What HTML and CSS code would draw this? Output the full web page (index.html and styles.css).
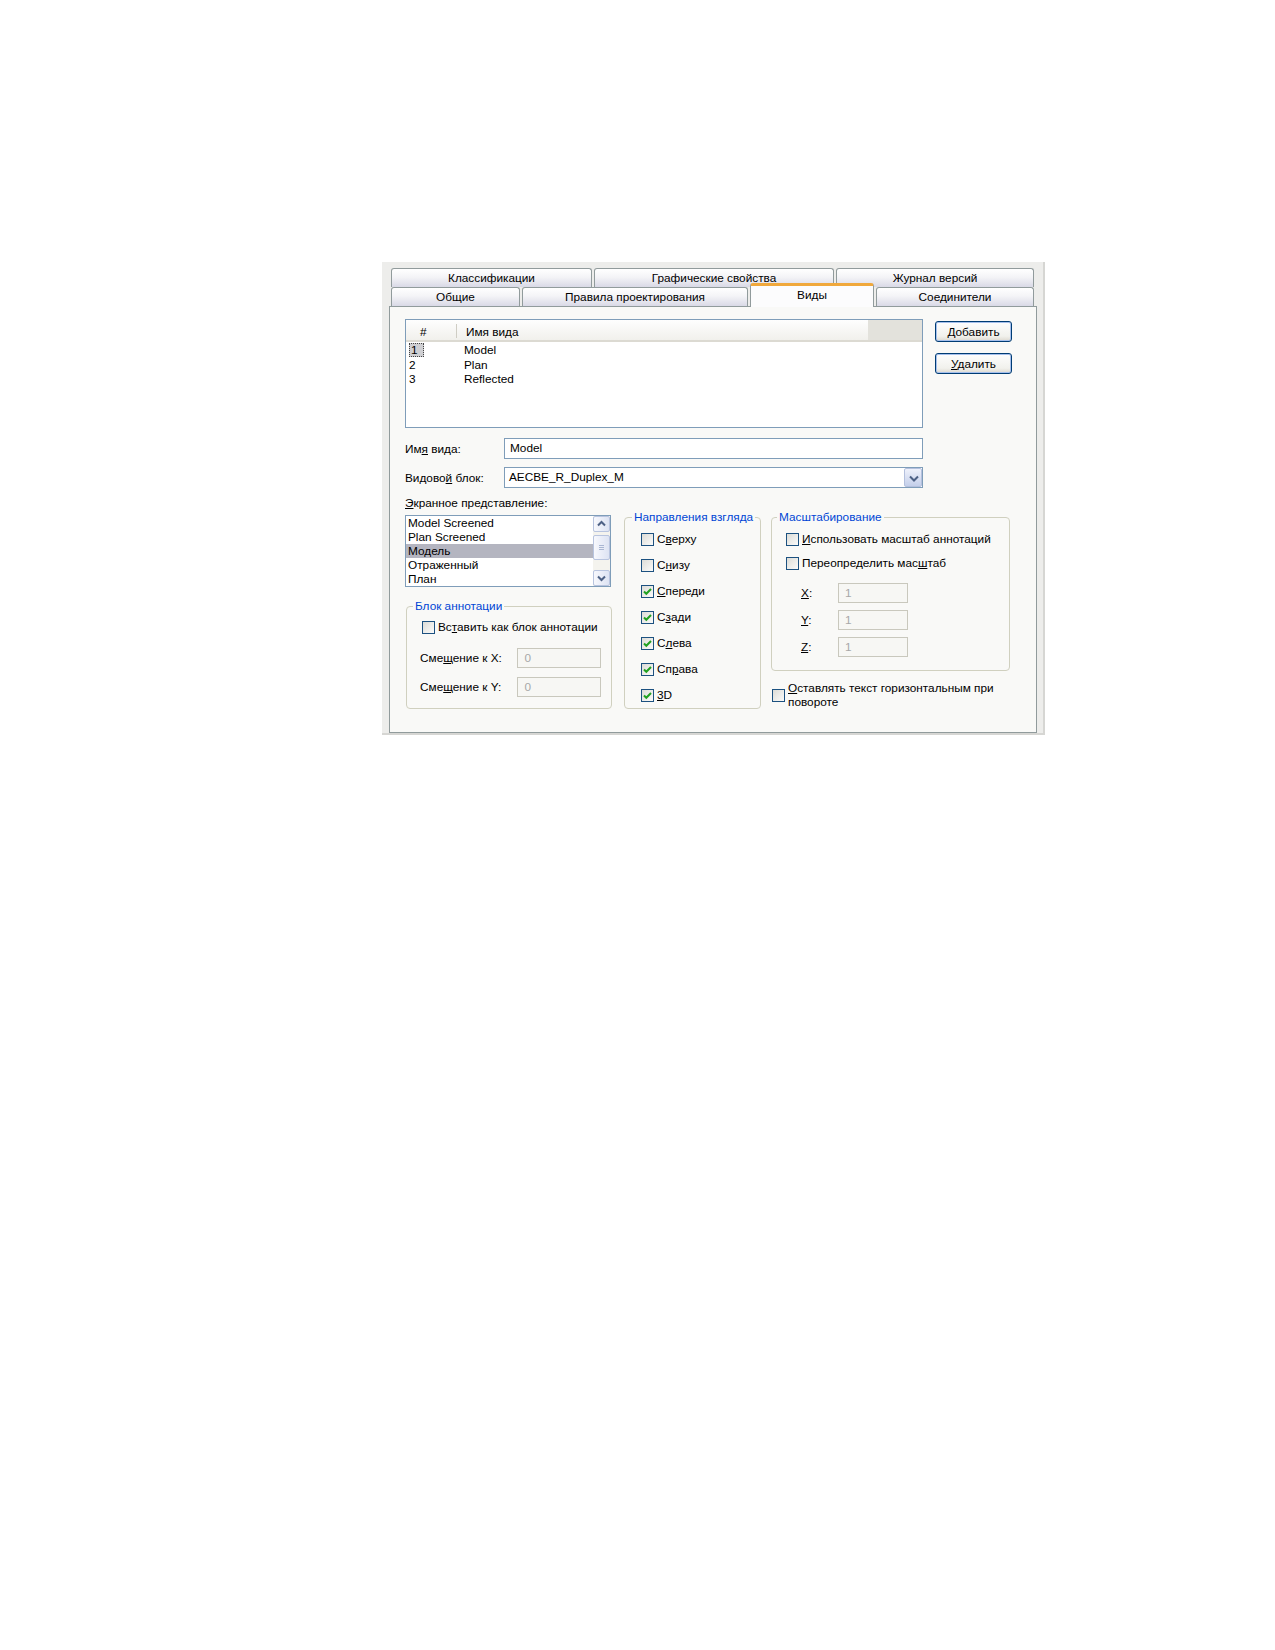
FILE: index.html
```html
<!DOCTYPE html>
<html lang="ru">
<head>
  <meta charset="UTF-8" />
  <title>Свойства стиля — Виды</title>
  <link rel="stylesheet" href="styles.css">
</head>
<body>
  <div class="page">
    <div class="dialog">
      <!-- two rows of tabs, the front row holds the active one -->
      <div class="tab-row">
        <div class="tab tab-classes">Классификации</div>
        <div class="tab tab-graphics">Графические свойства</div>
        <div class="tab tab-history">Журнал версий</div>
      </div>
      <div class="tab-row">
        <div class="tab tab-general">Общие</div>
        <div class="tab tab-rules">Правила проектирования</div>
        <div class="tab tab-views tab-active">Виды</div>
        <div class="tab tab-connectors">Соединители</div>
      </div>

      <div class="panel">
        <div class="top">
          <div class="top-main">
            <div class="listview">
              <div class="lv-head">
                <div class="lv-num">#</div>
                <div class="lv-name">Имя вида</div>
                <div class="lv-fill"></div>
              </div>
              <div class="lv-rows">
                <div class="lv-row"><span class="lv-num"><span class="focus">1</span></span><span class="lv-name">Model</span></div>
                <div class="lv-row"><span class="lv-num">2</span><span class="lv-name">Plan</span></div>
                <div class="lv-row"><span class="lv-num">3</span><span class="lv-name">Reflected</span></div>
              </div>
            </div>

            <div class="field field-name">
              <div class="field-label">Им<u>я</u> вида:</div>
              <div class="edit">Model</div>
            </div>
            <div class="field">
              <div class="field-label">Видово<u>й</u> блок:</div>
              <div class="combo">
                <span class="combo-text">AECBE_R_Duplex_M</span>
                <span class="combo-btn">
                  <svg width="18" height="19" viewBox="0 0 18 19"><path d="M5 7.5 L9 11.5 L13 7.5" fill="none" stroke="#4d6185" stroke-width="2"/></svg>
                </span>
              </div>
            </div>
          </div>

          <div class="buttons">
            <button class="btn"><u>Д</u>обавить</button>
            <button class="btn"><u>У</u>далить</button>
          </div>
        </div>

        <div class="bottom">
          <div class="col-display">
            <div class="caption"><u>Э</u>кранное представление:</div>
            <div class="listbox">
              <div class="lb-items">
                <div class="lb-item">Model Screened</div>
                <div class="lb-item">Plan Screened</div>
                <div class="lb-item selected">Модель</div>
                <div class="lb-item">Отраженный</div>
                <div class="lb-item">План</div>
              </div>
              <div class="scrollbar">
                <div class="sb-btn">
                  <svg width="15" height="14" viewBox="0 0 15 14"><path d="M4 8.5 L7.5 5 L11 8.5" fill="none" stroke="#4d6185" stroke-width="2"/></svg>
                </div>
                <div class="sb-thumb">
                  <svg width="15" height="23" viewBox="0 0 15 23"><path d="M5 9.5 H10 M5 11.5 H10 M5 13.5 H10" stroke="#a9b6d3" stroke-width="1"/></svg>
                </div>
                <div class="sb-track"></div>
                <div class="sb-btn">
                  <svg width="15" height="14" viewBox="0 0 15 14"><path d="M4 5.5 L7.5 9 L11 5.5" fill="none" stroke="#4d6185" stroke-width="2"/></svg>
                </div>
              </div>
            </div>

            <fieldset class="group group-note">
              <legend>Блок аннотации</legend>
              <div class="check"><span class="box"></span><span>Вс<u>т</u>авить как блок аннотации</span></div>
              <div class="offset offset-x">
                <span class="offset-label">Сме<u>щ</u>ение к X:</span>
                <span class="edit-off edit-offset">0</span>
              </div>
              <div class="offset offset-y">
                <span class="offset-label">Сме<u>щ</u>ение к Y:</span>
                <span class="edit-off edit-offset">0</span>
              </div>
            </fieldset>
          </div>

          <fieldset class="group group-dirs">
            <legend>Направления взгляда</legend>
            <div class="stack">
              <div class="check"><span class="box"></span><span>С<u>в</u>ерху</span></div>
              <div class="check"><span class="box"></span><span>С<u>н</u>изу</span></div>
              <div class="check"><span class="box checked"><svg width="11" height="11" viewBox="0 0 11 11"><path d="M2 5.5 L4.3 7.8 L9 3" fill="none" stroke="#21a121" stroke-width="2"/></svg></span><span><u>С</u>переди</span></div>
              <div class="check"><span class="box checked"><svg width="11" height="11" viewBox="0 0 11 11"><path d="M2 5.5 L4.3 7.8 L9 3" fill="none" stroke="#21a121" stroke-width="2"/></svg></span><span>С<u>з</u>ади</span></div>
              <div class="check"><span class="box checked"><svg width="11" height="11" viewBox="0 0 11 11"><path d="M2 5.5 L4.3 7.8 L9 3" fill="none" stroke="#21a121" stroke-width="2"/></svg></span><span>С<u>л</u>ева</span></div>
              <div class="check"><span class="box checked"><svg width="11" height="11" viewBox="0 0 11 11"><path d="M2 5.5 L4.3 7.8 L9 3" fill="none" stroke="#21a121" stroke-width="2"/></svg></span><span>Сп<u>р</u>ава</span></div>
              <div class="check"><span class="box checked"><svg width="11" height="11" viewBox="0 0 11 11"><path d="M2 5.5 L4.3 7.8 L9 3" fill="none" stroke="#21a121" stroke-width="2"/></svg></span><span><u>3</u>D</span></div>
            </div>
          </fieldset>

          <div class="col-scale">
            <fieldset class="group group-scale">
              <legend>Масштабирование</legend>
              <div class="check"><span class="box"></span><span><u>И</u>спользовать масштаб аннотаций</span></div>
              <div class="check check-second"><span class="box"></span><span>Переопределить мас<u>ш</u>таб</span></div>
              <div class="scale-row scale-row-first">
                <span class="scale-label"><u>X</u>:</span>
                <span class="edit-off edit-scale">1</span>
              </div>
              <div class="scale-row">
                <span class="scale-label"><u>Y</u>:</span>
                <span class="edit-off edit-scale">1</span>
              </div>
              <div class="scale-row">
                <span class="scale-label"><u>Z</u>:</span>
                <span class="edit-off edit-scale">1</span>
              </div>
            </fieldset>
            <div class="check-keep">
              <span class="box"></span>
              <span class="keep-text"><u>О</u>ставлять текст горизонтальным при повороте</span>
            </div>
          </div>
        </div>
      </div>
    </div>
  </div>
</body>
</html>
```

FILE: styles.css
```css
* {
  box-sizing: border-box;
}

body {
  margin: 0;
  background: #ffffff;
  color: #000000;
  font-family: "Liberation Sans", Arial, sans-serif;
  font-size: 11.8px;
}

.page {
  padding: 262px 0 0 382px;
}

.dialog {
  width: 663px;
  height: 473px;
  padding: 6px 6px 0 7px;
  background: #ededeb;
  border-right: 2px solid #d6d6d3;
  border-bottom: 2px solid #d6d6d3;
}

/* Tabs */
.tab-row {
  display: flex;
  gap: 2px;
  height: 19px;
  margin-left: 2px;
}

.tab {
  height: 19px;
  border: 1px solid #919b9c;
  border-bottom: none;
  border-radius: 3px 3px 0 0;
  background: linear-gradient(#ffffff, #f4f4f7 45%, #d9d9e6);
  text-align: center;
  line-height: 18px;
  white-space: nowrap;
}

.tab-classes { width: 201px; }
.tab-graphics { width: 240px; }
.tab-history { width: 198px; }
.tab-general { width: 129px; }
.tab-rules { width: 226px; }
.tab-views { width: 124px; }
.tab-connectors { width: 158px; }

.tab-active {
  position: relative;
  z-index: 1;
  height: 24px;
  margin-top: -4px;
  border-top: 3px solid #f0a83c;
  background: #fcfcfd;
}

/* Page of the active tab */
.panel {
  height: 427px;
  padding: 12px 0 0 15px;
  border: 1px solid #919b9c;
  background: #f9f9f7;
}

.top {
  display: flex;
  gap: 12px;
}

.top-main {
  width: 518px;
}

/* Views list */
.listview {
  height: 109px;
  border: 1px solid #7f9db9;
  background: #ffffff;
}

.lv-head {
  display: flex;
  height: 22px;
  padding-top: 4px;
  line-height: 16px;
  border-bottom: 2px solid #dcdad2;
  background: linear-gradient(#fefefe, #f1f0ec);
}

.lv-head .lv-num {
  width: 50px;
  padding-left: 14px;
}

.lv-head .lv-name {
  flex: 1;
  padding-left: 10px;
  background: linear-gradient(#cfcdc4, #cfcdc4) left 0 / 1px 14px no-repeat;
}

.lv-fill {
  width: 54px;
  margin-top: -4px;
  background: #e3e2dc;
}

.lv-rows {
  padding-top: 1px;
}

.lv-row {
  display: flex;
  height: 14.5px;
  line-height: 14px;
}

.lv-row .lv-num {
  width: 58px;
  padding-left: 3px;
}

.focus {
  display: inline-block;
  width: 15px;
  height: 14px;
  padding-left: 2px;
  background: #cfcfd2;
  outline: 1px dotted #444444;
  outline-offset: -1px;
}

/* Name and block fields */
.field {
  display: flex;
  align-items: center;
  height: 21px;
  margin-top: 8px;
}

.field-name {
  margin-top: 10px;
}

.field-label {
  width: 99px;
}

.edit {
  flex: 1;
  height: 21px;
  padding-left: 5px;
  border: 1px solid #7f9db9;
  background: #ffffff;
  line-height: 19px;
}

.combo {
  flex: 1;
  display: flex;
  height: 21px;
  border: 1px solid #7f9db9;
  background: #ffffff;
}

.combo-text {
  flex: 1;
  padding-left: 4px;
  line-height: 19px;
}

.combo-btn {
  width: 18px;
  height: 19px;
  border: 1px solid #b4c0dd;
  border-radius: 2px;
  background: linear-gradient(#eef1fb, #c4cfea);
}

.combo-btn svg,
.sb-btn svg,
.sb-thumb svg,
.box svg {
  display: block;
}

.buttons {
  display: flex;
  flex-direction: column;
  gap: 11px;
  padding-top: 2px;
}

.btn {
  width: 77px;
  height: 21px;
  padding: 0;
  border: 1px solid #003c74;
  border-radius: 3px;
  background: linear-gradient(#fefefe, #f1f1ec 75%, #dcd8cf);
  box-shadow: inset 0 0 0 1px #a6c0ec;
  color: #000000;
  font: inherit;
}

/* Lower part: display list and option groups */
.bottom {
  display: flex;
  align-items: flex-start;
  margin-top: 8px;
}

.col-display {
  width: 207px;
}

.caption {
  line-height: 14px;
}

.listbox {
  display: flex;
  width: 206px;
  height: 72px;
  margin-top: 5px;
  border: 1px solid #7f9db9;
  background: #ffffff;
}

.lb-items {
  flex: 1;
}

.lb-item {
  height: 14px;
  padding-left: 2px;
  line-height: 14px;
  white-space: nowrap;
}

.lb-item.selected {
  background: #b4b5c0;
}

.scrollbar {
  display: flex;
  flex-direction: column;
  width: 17px;
  background: #f4f3ee;
}

.sb-btn,
.sb-thumb {
  border: 1px solid #b8c4df;
  border-radius: 2px;
  background: linear-gradient(90deg, #f7f8fd, #dde3f3);
}

.sb-btn {
  height: 16px;
}

.sb-thumb {
  height: 25px;
  margin-top: 3px;
}

.sb-track {
  flex: 1;
}

/* Group boxes; the legend sits at the padding edge, so pull it back */
.group {
  min-width: 0;
  margin: 0;
  border: 1px solid #d0d0bf;
  border-radius: 4px;
}

.group legend {
  padding: 0 2px;
  color: #0046d5;
  line-height: 14px;
  white-space: nowrap;
}

.group-note {
  width: 206px;
  margin: 12px 0 0 1px;
  padding: 7px 10px 11px 15px;
}

.group-note legend {
  margin-left: -9px;
}

.group-dirs {
  width: 137px;
  margin: 14px 0 0 12px;
  padding: 8px 0 6px 16px;
}

.group-dirs legend {
  margin-left: -9px;
}

.stack {
  display: flex;
  flex-direction: column;
  gap: 12px;
}

.col-scale {
  width: 239px;
  margin: 14px 0 0 10px;
}

.group-scale {
  padding: 8px 0 13px 14px;
}

.group-scale legend {
  margin-left: -9px;
}

/* Checkboxes */
.check {
  display: flex;
  align-items: center;
  height: 14px;
  white-space: nowrap;
}

.check-second {
  margin-top: 10px;
}

.box {
  flex: none;
  width: 13px;
  height: 13px;
  margin-right: 3px;
  border: 1px solid #1c5180;
  background: linear-gradient(135deg, #dcdcd7, #fbfbfa);
}

.check-keep {
  display: flex;
  align-items: center;
  margin: 10px 0 0 1px;
}

.keep-text {
  line-height: 14px;
}

/* Disabled number inputs */
.offset,
.scale-row {
  display: flex;
  align-items: center;
  height: 20px;
}

.offset-x {
  margin-top: 14px;
}

.offset-y {
  margin-top: 9px;
}

.offset-label {
  width: 98px;
  margin-left: -2px;
}

.edit-off {
  height: 20px;
  padding-left: 6px;
  border: 1px solid #c9c8bd;
  background: #f7f7f4;
  color: #a8a8a8;
  line-height: 18px;
}

.edit-offset {
  width: 84px;
}

.scale-row {
  margin-top: 7px;
  padding-left: 15px;
}

.scale-row-first {
  margin-top: 13px;
}

.scale-label {
  width: 37px;
}

.edit-scale {
  width: 70px;
}
```
